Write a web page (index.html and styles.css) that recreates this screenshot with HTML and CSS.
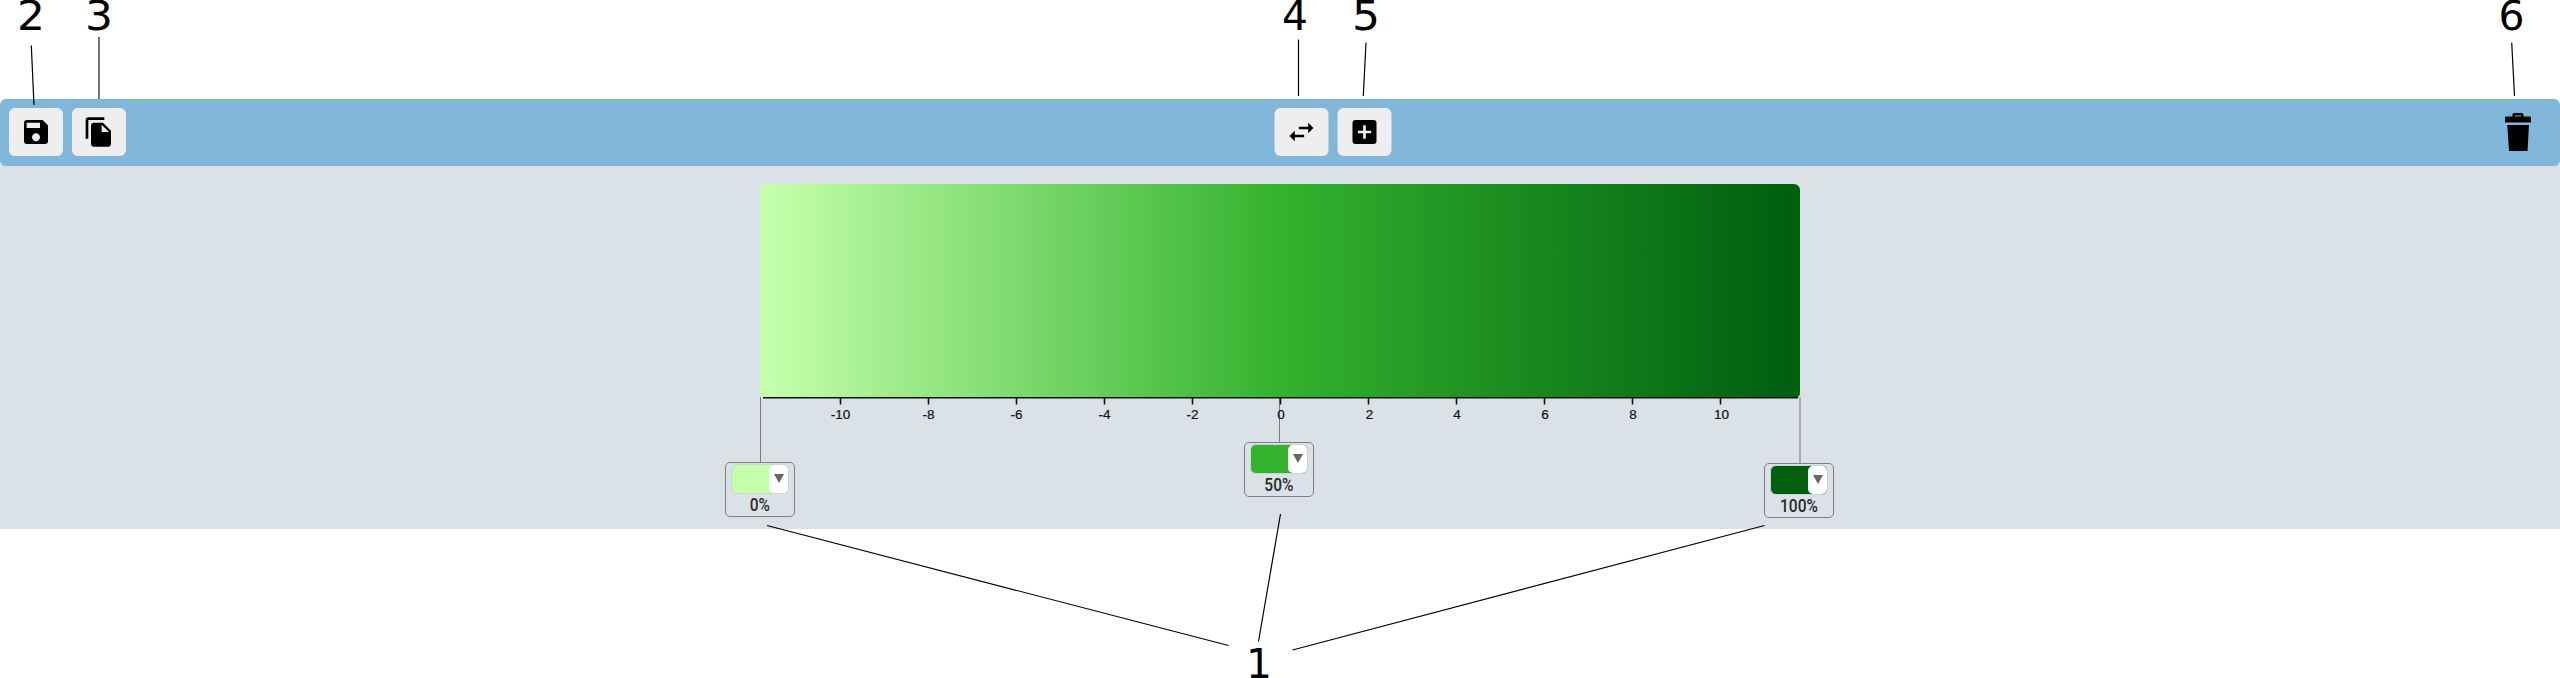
FILE: index.html
```
<!DOCTYPE html>
<html lang="en">
<head>
<meta charset="utf-8">
<title>Color scale editor</title>
<link rel="stylesheet" href="styles.css">
</head>
<body>
<div class="page">
  <main class="editor">
    <header class="toolbar">
      <div class="group">
        <button class="btn" aria-label="Save"><svg viewBox="0 0 24 24"><path d="M17 3H5c-1.1 0-2 .9-2 2v14c0 1.100.9 2 2 2h14c1.100 0 2-.9 2-2V7l-4-4zm-5 16c-1.660 0-3-1.340-3-3s1.340-3 3-3 3 1.340 3 3-1.340 3-3 3zm3-10H5V5h10v4z"/></svg></button>
        <button class="btn" aria-label="Copy"><svg viewBox="0 0 24 24"><path d="M16 1H4c-1.100 0-2 .9-2 2v14h2V3h12V1zm-1 4l6 6v10c0 1.100-.9 2-2 2H7.990C6.890 23 6 22.100 6 21l.01-14c0-1.100.890-2 1.990-2h7zm-1 7h5.500L14 6.500V12z"/></svg></button>
      </div>
      <div class="group">
        <button class="btn" aria-label="Invert"><svg viewBox="0 0 24 24"><path d="M6.990 11L3 15l3.990 4v-3H14v-2H6.990v-3zM21 9l-3.990-4v3H10v2h7.010v3L21 9z"/></svg></button>
        <button class="btn" aria-label="Add"><svg viewBox="0 0 24 24"><path d="M19 3H5c-1.110 0-2 .9-2 2v14c0 1.100.890 2 2 2h14c1.100 0 2-.9 2-2V5c0-1.100-.9-2-2-2zm-2 10h-4v4h-2v-4H7v-2h4V7h2v4h4v2z"/></svg></button>
      </div>
      <div class="group end">
        <svg class="trash" viewBox="0 0 26 38"><path d="M0 4.500Q0 3.500 1 3.500H7.500V1.500Q7.500 0 9 0H17Q18.500 0 18.500 1.500V3.500H25Q26 3.500 26 4.500V9.500H0ZM10 2.500V3.500H16V2.500ZM2.300 12H24L22.500 38H4Z"/></svg>
      </div>
    </header>
    <section class="scale">
      <div class="ramp"></div>
      <svg class="axis" viewBox="0 0 1040 30">
        <path class="ticks" d="M3 .8H1038M80.500 0V7.500M168.500 0V7.500M256.500 0V7.500M344.500 0V7.500M432.500 0V7.500M520.500 0V7.500M608.500 0V7.500M696.500 0V7.500M784.500 0V7.500M872.500 0V7.500M960.500 0V7.500"/>
        <g class="labels">
          <text x="80.500" y="22">-10</text><text x="168.500" y="22">-8</text><text x="256.500" y="22">-6</text><text x="344.500" y="22">-4</text><text x="432.500" y="22">-2</text><text x="521" y="22">0</text><text x="609.500" y="22">2</text><text x="697" y="22">4</text><text x="785" y="22">6</text><text x="873" y="22">8</text><text x="961.500" y="22">10</text>
        </g>
      </svg>
      <div class="stop first"><i class="stem"></i><div class="card"><div class="swatch"><span class="drop"></span></div><b>0%</b></div></div>
      <div class="stop middle"><i class="stem"></i><div class="card"><div class="swatch"><span class="drop"></span></div><b>50%</b></div></div>
      <div class="stop last"><i class="stem"></i><div class="card"><div class="swatch"><span class="drop"></span></div><b>100%</b></div></div>
    </section>
  </main>
  <svg class="callouts" viewBox="0 0 2560 678">
    <path class="soft" d="M99 37V99"/>
    <path d="M31.300 45.500L34 105M1298.500 39.500V96M1366 42.500L1363.300 96M2511.700 42.500L2514.500 96M767 525.500L1228.500 645.500M1280.500 514L1258.500 641.500M1764.500 525.500L1292.500 650"/>
    <g class="numbers">
      <text x="31" y="30" textLength="28" lengthAdjust="spacingAndGlyphs">2</text>
      <text x="99" y="30" textLength="28" lengthAdjust="spacingAndGlyphs">3</text>
      <text x="1295" y="30" textLength="26" lengthAdjust="spacingAndGlyphs">4</text>
      <text x="1366" y="30" textLength="28" lengthAdjust="spacingAndGlyphs">5</text>
      <text x="2511.500" y="30" textLength="26" lengthAdjust="spacingAndGlyphs">6</text>
      <text x="1259" y="678" textLength="26" lengthAdjust="spacingAndGlyphs">1</text>
    </g>
  </svg>
</div>
</body>
</html>
```
FILE: styles.css
```
* { box-sizing: border-box; }
body { margin: 0; background: #fff; }
.page { position: relative; width: 2560px; height: 678px; padding-top: 99px; overflow: hidden; }
.editor { height: 430px; background: #dae1e7; background: linear-gradient(#fff 30px, #dae1e7 30px); }
.toolbar {
  display: grid;
  grid-template-columns: 1fr auto 1fr;
  align-items: center;
  height: 66.500px;
  padding: 0 9px;
  background: #80b6da;
  border-radius: 6px;
}
.group { display: flex; gap: 9px; }
.group:nth-child(2) { transform: translateX(52.500px); }
.end { justify-content: flex-end; padding-right: 20px; }
.btn {
  display: flex;
  align-items: center;
  justify-content: center;
  width: 54px;
  height: 48px;
  padding: 0;
  border: 0;
  border-radius: 6px;
  background: #eee;
}
.btn svg { width: 32px; height: 32px; }
.trash { width: 26px; height: 38px; }
.scale { position: relative; width: 1040px; margin: 18.500px auto 0; }
.ramp {
  height: 214px;
  border-radius: 6px 6px 5px 0;
  background: linear-gradient(90deg, #c4ffab 0%, #c4ffab 1%, #33b22e 50%, #006010 98.500%);
}
.axis { position: relative; z-index: 1; display: block; width: 1040px; height: 30px; margin-top: -1px; }
.ticks { stroke: #111; stroke-width: 1.600; fill: none; }
.labels { font: 13.500px "Liberation Sans", Arial, sans-serif; text-anchor: middle; fill: #111; stroke: #111; stroke-width: .2; }
.stop {
  position: absolute;
  top: 212.500px;
  display: flex;
  flex-direction: column;
  align-items: center;
  width: 70px;
}
.stem { width: 1px; background: #77797c; }
.first { left: -35px; }
.middle { left: 484px; }
.last { left: 1004px; }
.first .stem { height: 65px; }
.middle .stem { height: 45px; }
.last .stem { height: 66px; transform: translateX(.5px); }
.card {
  display: flex;
  flex-direction: column;
  align-items: center;
  width: 70px;
  height: 55px;
  padding-top: 1px;
  border: 1.500px solid #7d8083;
  border-radius: 5px;
}
.swatch {
  display: flex;
  justify-content: flex-end;
  width: 58px;
  height: 30px;
  border: 1px solid #cdd2d3;
  border-radius: 6px;
}
.first .swatch { background: #c4ffab; }
.middle .swatch { background: #33b22e; }
.last .swatch { background: #006010; }
.drop { display: flex; align-items: center; justify-content: center; width: 19px; border-radius: 5px; background: #fff; }
.drop::before {
  content: "";
  border-top: 9px solid #666;
  border-left: 5px solid transparent;
  border-right: 5px solid transparent;
}
.card b { font: 500 18px/21px Roboto, sans-serif; color: #2a2a2a; transform: scaleX(.86); }
.callouts { position: absolute; inset: 0; width: 2560px; height: 678px; pointer-events: none; }
.callouts path { stroke: #000; stroke-width: 1.200; fill: none; }
.callouts .soft { stroke: #777; stroke-width: 2; }
.numbers { font: 40px "DejaVu Sans", Verdana, sans-serif; text-anchor: middle; }
```
